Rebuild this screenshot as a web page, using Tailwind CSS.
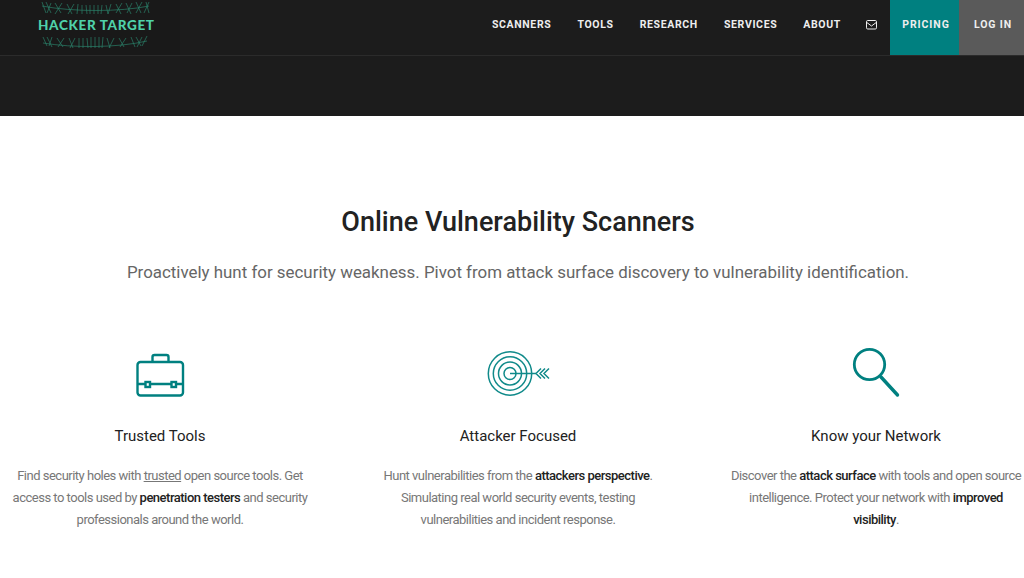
<!DOCTYPE html>
<html lang="en">
<head>
  <meta charset="UTF-8" />
  <meta name="viewport" content="width=device-width, initial-scale=1" />
  <title>Hacker Target</title>
  <script src="https://cdn.jsdelivr.net/npm/@tailwindcss/browser@4"></script>
</head>
<body class="bg-white h-[578px] overflow-hidden font-[Roboto,sans-serif]">

  <header class="bg-[#1c1c1c] h-[116px]">
    <nav class="h-[56px] flex justify-between border-b border-[#2b2b2b]">
      <a href="#" class="relative block w-[180px] h-[55px] bg-[#191919]">
        <svg class="absolute left-[38px] top-0" width="116" height="55" viewBox="0 0 116 55" fill="none" stroke="#2a8068" stroke-width="0.7">
          <path d="M4 2l4 11M8 2l5 11M13 3l-4 10M17 3l6 10M24 3l-7 11M29 4l5 10M36 4l-6 10M40 4l-1 10M44 5v9M48 5l1 9M52 5v9M56 5v9M60 5v9M64 5l-1 9M68 5l2 9M73 4l-3 10M78 4l5 10M84 3l-6 10M88 3l5 11M94 3l-5 10M98 2l5 11M104 2l-6 11M108 2l3 11M111 2l-5 11M4 6c30 6 78 6 107 0" />
          <path d="M5 37l4 9M9 37l5 10M14 37l-3 9M19 38l6 9M26 38l-6 9M31 38l4 10M37 38l-5 10M41 38v10M45 38v10M49 38l1 10M53 37v11M57 37v11M61 37v11M65 37l-1 11M69 38l3 10M76 38l-5 10M81 38l5 9M88 38l-6 9M93 37l4 10M98 37l5 9M104 37l-5 10M109 36l-5 10M5 43c30 5 74 5 104-2" />
        </svg>
        <span class="absolute left-[38px] top-[17px] text-[13.5px] leading-[16px] font-[Lato,sans-serif] font-black tracking-[0.65px] whitespace-nowrap text-[#4fd1a9]">HACKER TARGET</span>
      </a>
      <div class="flex h-[55px] items-center text-[10.5px] font-bold tracking-[0.65px] text-[#eeeeee]">
        <div class="flex h-full items-center pb-[6px] gap-[26px] mr-[12px]">
          <a href="#">SCANNERS</a>
          <a href="#">TOOLS</a>
          <a href="#">RESEARCH</a>
          <a href="#">SERVICES</a>
          <a href="#">ABOUT</a>
          <a href="#" class="ml-[-1px]">
            <svg width="12" height="10" viewBox="0 0 12 10" fill="none" stroke="#eeeeee" stroke-width="1"><rect x="0.5" y="0.5" width="10" height="8.5" rx="1.2"/><path d="M0.8 2.5L5.5 6l4.7-3.5"/></svg>
          </a>
        </div>
        <a href="#" class="w-[69px] h-full pb-[6px] pl-[3px] flex items-center justify-center bg-[#008080] tracking-[0.9px]">PRICING</a>
        <a href="#" class="w-[65px] h-full pb-[6px] pl-[3px] flex items-center justify-center bg-[#5a5a5a] tracking-[0.9px]">LOG IN</a>
      </div>
    </nav>
  </header>

  <main class="ml-[-19px] w-[1074px]">
    <h1 class="mt-[88px] text-center text-[27px] leading-[36px] font-medium text-[#222222]">Online Vulnerability Scanners</h1>
    <p class="mt-[19px] text-center text-[16.9px] leading-[26px] text-[#666666]">Proactively hunt for security weakness. Pivot from attack surface discovery to vulnerability identification.</p>

    <div class="mt-[62px] grid grid-cols-3">
      <div class="flex flex-col items-center text-center">
        <svg class="h-[54px]" width="54" height="54" viewBox="0 0 54 54" fill="none" stroke="#008080" stroke-width="2.4">
          <rect x="4.5" y="15" width="45.5" height="33.5" rx="3"/>
          <path d="M19.5 15v-5a2 2 0 0 1 2-2h12a2 2 0 0 1 2 2v5"/>
          <path d="M4.5 37h7.5M17.5 37h20.5M43.5 37h6.5"/>
          <rect x="12.5" y="35" width="4.5" height="5"/>
          <rect x="38.5" y="35" width="4.5" height="5"/>
        </svg>
        <h3 class="mt-[23px] text-[15px] leading-[24px] text-[#222222]">Trusted Tools</h3>
        <p class="mt-[17px] w-[310px] text-[13px] leading-[22px] tracking-[-0.5px] text-[#777777]">Find security holes with <u>trusted</u> open source tools. Get access to tools used by <b class="font-medium text-[#222222]">penetration testers</b> and security professionals around the world.</p>
      </div>
      <div class="flex flex-col items-center text-center">
        <svg class="h-[54px]" width="66" height="54" viewBox="0 0 66 54" fill="none" stroke="#108a8a" stroke-width="1.5">
          <circle cx="25" cy="26.5" r="21.7"/>
          <circle cx="25" cy="26.5" r="16.7"/>
          <circle cx="25" cy="26.5" r="11.5"/>
          <circle cx="25" cy="26.5" r="6"/>
          <path d="M25 26.5h26"/>
          <path d="M56 21.5l-5 5 5 5M60 21.5l-5 5 5 5M64 21.5l-5 5 5 5"/>
        </svg>
        <h3 class="mt-[23px] text-[15px] leading-[24px] text-[#222222]">Attacker Focused</h3>
        <p class="mt-[17px] w-[310px] text-[13px] leading-[22px] tracking-[-0.5px] text-[#777777]">Hunt vulnerabilities from the <b class="font-medium text-[#222222]">attackers perspective</b>. Simulating real world security events, testing<br />vulnerabilities and incident response.</p>
      </div>
      <div class="flex flex-col items-center text-center">
        <svg class="h-[54px]" width="50" height="54" viewBox="0 0 50 54" fill="none" stroke="#008080">
          <circle cx="18.5" cy="17.5" r="15.2" stroke-width="2.8"/>
          <path d="M30 30L46.5 48" stroke-width="3.4" stroke-linecap="round"/>
        </svg>
        <h3 class="mt-[23px] text-[15px] leading-[24px] text-[#222222]">Know your Network</h3>
        <p class="mt-[17px] w-[310px] text-[13px] leading-[22px] tracking-[-0.5px] text-[#777777]">Discover the <b class="font-medium text-[#222222]">attack surface</b> with tools and open source intelligence. Protect your network with <b class="font-medium text-[#222222]">improved<br />visibility</b>.</p>
      </div>
    </div>
  </main>

</body>
</html>
